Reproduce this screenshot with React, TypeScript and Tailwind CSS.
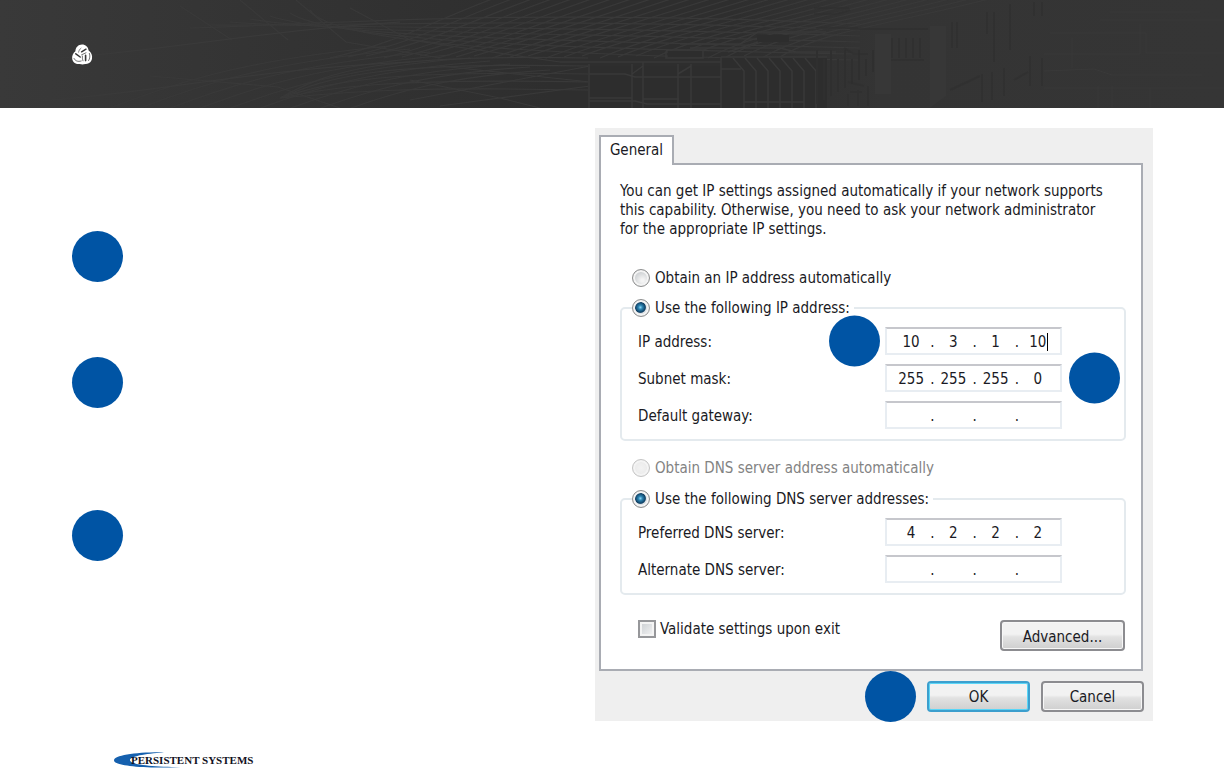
import { type ReactNode, useId } from "react";

const range = (n: number) => Array.from({ length: n }, (_, i) => i);

function HeaderArt() {
  return (
    <svg
      className="absolute inset-0 h-full w-full"
      viewBox="0 0 1224 108"
      preserveAspectRatio="none"
      fill="none"
      aria-hidden="true"
    >
      <defs>
        <linearGradient id="sky" x1="0" x2="1" y1="0" y2="0">
          <stop offset="0" stopColor="#393939" />
          <stop offset="0.28" stopColor="#323232" />
          <stop offset="0.45" stopColor="#2e2e2e" />
          <stop offset="0.6" stopColor="#2e2e2e" />
          <stop offset="0.72" stopColor="#343434" />
          <stop offset="1" stopColor="#353535" />
        </linearGradient>
        <linearGradient id="fade" x1="0" x2="1" y1="0" y2="0">
          <stop offset="0" stopColor="#3a3a3a" stopOpacity="0.1" />
          <stop offset="0.3" stopColor="#3a3a3a" />
          <stop offset="1" stopColor="#3a3a3a" />
        </linearGradient>
      </defs>
      <rect width="1224" height="108" fill="url(#sky)" />
      <g stroke="#393939" strokeWidth="1.2">
        {range(26).map((i) => (
          <path key={i} d={`M${330 + i * 18} ${58 - (i % 3)} C${400 + i * 17} ${42 - i / 2} ${430 + i * 19} 22 ${500 + i * 20} -4`} />
        ))}
        {range(7).map((i) => (
          <path key={i} d={`M${190 + i * 20} ${28 - i * 3} C330 ${24 + i * 3} 520 ${8 + i * 8} 860 ${24 + i * 6}`} />
        ))}
        {range(9).map((i) => (
          <path key={i} d={`M${100 + i * 30} 112 C${170 + i * 28} ${84 + i} ${240 + i * 26} ${60 + i * 2} ${390 + i * 20} ${46 + i * 3}`} />
        ))}
        {range(5).map((i) => (
          <path key={i} d={`M280 98 C330 ${70 + i * 6} 380 ${54 + i * 8} 588 ${58 + i * 8}`} />
        ))}
        <path d="M180 6 L232 40M240 0 L288 40M296 0 L346 42L440 58M350 8 L410 40L560 62M410 80 L500 98L540 108M440 66 L590 82M150 76 L278 87L340 108M410 100 L590 66M440 106 L590 86" />
      </g>
      <path d="M588 66h133v-9h106v51H588z" fill="#2d2d2d" />
      <path d="M668 51h36v6h-36zM757 35h32v7h-32z" fill="#2d2d2d" />
      <g stroke="#393939" strokeWidth="1.5">
        <path d="M589 64V108M632 64V108M643 62V108M678 64V108M691 64V108M721 57V108" />
        <path d="M589 74h36l10 3h86M589 98h43M589 101h46l12 3h74M643 99h36M560 62h161M721 57h106M721 69h20" />
        <path d="M666 52q0-2 3-2h34v8h-37zM680 44h60l18-12h68M690 48h90l16 4h40M758 42l-30 10" />
        {range(7).map((i) => (
          <path key={i} d={`M${733 + i * 12} 58l11 13V108`} />
        ))}
        <path d="M632 74l11-8M678 74l13-8M744 102h60" />
      </g>
      <g stroke="#2f2f2f" strokeWidth="2">
        {range(9).map((i) => (
          <path key={i} d={`M${817 + i * 7} ${50 + (i % 2) * 9}V${104 - i * 4}`} />
        ))}
        {range(5).map((i) => (
          <path key={i} d={`M${892 + i * 7} 38V58`} strokeOpacity="0.8" />
        ))}
        <path d="M814 8h35M814 14h22l14-4M816 28h42M850 29h78M844 48l10 6h14M952 22v26M957 22v26M987 12v22M994 12v50M1010 4v46M1034 2v14M1042 2v14M890 60h34" strokeOpacity="0.6" />
        <path d="M848 82l16 4M850 92h12M848 106V94M858 106V90M868 106V86M950 90l30-14M982 74v28M992 72v28M1004 68v28M1014 80l14-8M1030 56v30M1042 58v28" strokeOpacity="0.6" />
      </g>
      <path d="M875 34h16v60h-16zM930 26h16v70l-16 12z" fill="#373737" />
      <g stroke="#393939" strokeWidth="1">
        <path d="M1050 33h96v20h78M1072 38v30M1044 54h96M1044 71l50-2l18 6h90M1044 88h180M1100 20h124M1110 12h90M1140 24v30M1098 86v22M1112 86v22M1150 88v20" />
        <path d="M0 104 C160 94 240 70 410 62M0 62C140 56 260 30 400 22" stroke="url(#fade)" />
      </g>
    </svg>
  );
}

function KnotMark() {
  return (
    <svg className="relative h-[21px] w-[22px]" viewBox="0 0 22 21" role="img" aria-label="Knot emblem">
      <path
        d="M11 0.6C14.6 0.6 17.2 3 17.6 6.6C20.2 8.4 21.6 11.4 21 14.6C20.4 18.2 17.6 20.4 14.2 20C12.6 20.6 10.4 20.6 8.8 20C5 20.6 1.8 18.4 1.2 15C0.8 12 2 9 4.4 7.2C4.6 3.4 7.4 0.6 11 0.6Z"
        fill="#fff"
      />
      <g fill="none" stroke="#383838" strokeLinecap="round">
        <path d="M10.6 7.8L15 5.2" strokeWidth="1.5" />
        <path d="M14.6 11.4V16.6" strokeWidth="1.6" />
        <path d="M4.8 9.8L9.2 13" strokeWidth="1.5" />
        <path d="M7.6 8.2C7.8 6.6 8.6 5.2 10 4.2" strokeWidth="0.6" />
        <path d="M18.4 9.4C19.2 11.8 19 14.4 17.6 16.6M10.6 10.8L15 8.8" strokeWidth="0.7" />
        <path d="M3 14.4C4.2 17 6.8 18 10.2 17M11.4 12C11.2 13.6 11.4 15.2 12 16.8" strokeWidth="0.7" />
      </g>
    </svg>
  );
}

function Dot({ className = "" }: { className?: string }) {
  return <span className={`block size-[51px] shrink-0 rounded-full bg-[#0054a4] ${className}`} />;
}

const radioBase =
  "m-0 size-[18px] shrink-0 appearance-none rounded-full border border-[#8e8f8f] shadow-[inset_0_0_0_2px_#f4f4f4] bg-[radial-gradient(circle_at_60%_65%,#f4f4f4_10%,#c4c8cb_75%)] checked:bg-[radial-gradient(circle_at_46%_46%,#8fd8f6_0px,#2e86b4_2px,#0f3f63_5px,#dfe3e6_6px,#c4c8cb_8px)] disabled:border-[#c4c4c4] disabled:bg-[radial-gradient(circle,#f2f2f2,#e6e6e6)]";

function Radio({ name, label, checked, disabled }: { name: string; label: string; checked?: boolean; disabled?: boolean }) {
  return (
    <label className={`flex h-5 items-center gap-[5px] ${disabled ? "text-[#838383]" : ""}`}>
      <input type="radio" name={name} defaultChecked={checked} disabled={disabled} className={radioBase} />
      <span>{label}</span>
    </label>
  );
}

function AddressField({ label, parts, caret, children }: { label: string; parts: string[]; caret?: boolean; children?: ReactNode }) {
  const id = useId();
  return (
    <div className="flex h-[28px] items-center">
      <label htmlFor={id} className="flex-1 pt-[2px]">
        {label}
      </label>
      <div className="relative flex h-[28px] w-[177px] items-center border-2 border-[#e8edf2] border-t-[#c6c7cc] bg-white pt-[2px] pr-[3px] pl-[5px]">
        {parts.map((part, i) => (
          <span key={i} className="contents">
            {i > 0 && <span className="w-1 text-center">.</span>}
            <span className="relative flex min-w-0 flex-1">
              <input
                id={i === 0 ? id : undefined}
                aria-label={i === 0 ? undefined : `${label} part ${i + 1}`}
                defaultValue={part}
                className="w-full min-w-0 bg-transparent p-0 text-center outline-none"
              />
              {caret && i === 3 && <span className="absolute top-0 right-[9px] h-[18px] w-px bg-black" />}
            </span>
          </span>
        ))}
        {children}
      </div>
    </div>
  );
}

function Group({ legend, name, children }: { legend: string; name: string; children: ReactNode }) {
  return (
    <fieldset className="rounded-[5px] border-2 border-[#e4eaee] pr-[62px] pb-[10px] pl-[10px]">
      <legend className="pr-1">
        <Radio name={name} label={legend} checked />
      </legend>
      <div className="flex flex-col gap-[9px] pt-[9px] pl-[6px]">{children}</div>
    </fieldset>
  );
}

function Button({ children, primary, className }: { children: ReactNode; primary?: boolean; className: string }) {
  return (
    <button
      type="button"
      className={`h-[31px] rounded-[4px] border-2 bg-linear-to-b from-[#f2f2f2] from-45% via-[#e2e2e2] via-55% to-[#cfcfcf] pt-[2px] ${
        primary ? "border-[#3c9fce] shadow-[inset_0_0_0_1px_#5ad6f7]" : "border-[#8c8c90] shadow-[inset_0_0_0_1px_#f7f7f7]"
      } ${className}`}
    >
      {children}
    </button>
  );
}

function NetworkDialog() {
  return (
    <form className="w-[558px] shrink-0 bg-[#efefef] pt-[7px] pr-[9px] pl-1 font-['DejaVu_Sans_Condensed','Noto_Sans',sans-serif] text-[15px] leading-[18px] text-[#1a1a24]">
      <div role="tablist" className="flex">
        <button
          type="button"
          role="tab"
          aria-selected="true"
          className="relative z-10 -mb-[2px] h-[30px] w-[75px] border-2 border-b-0 border-[#a9acb3] bg-white pb-[2px]"
        >
          General
        </button>
      </div>
      <div className="mr-[1px] border-2 border-[#a9acb3] bg-white pt-[17px] pr-[15px] pb-[18px] pl-[19px]">
        <p className="leading-[19px]">
          You can get IP settings assigned automatically if your network supports
          <br />
          this capability. Otherwise, you need to ask your network administrator
          <br />
          for the appropriate IP settings.
        </p>
        <div className="mt-[29px] pl-[12px]">
          <Radio name="ip" label="Obtain an IP address automatically" />
        </div>
        <div className="mt-[10px]">
          <Group name="ip" legend="Use the following IP address:">
            <AddressField label="IP address:" parts={["10", "3", "1", "10"]} caret>
              <Dot className="absolute top-1/2 right-full mr-[7px] -translate-y-1/2" />
            </AddressField>
            <AddressField label="Subnet mask:" parts={["255", "255", "255", "0"]}>
              <Dot className="absolute top-1/2 left-full ml-[9px] -translate-y-1/2" />
            </AddressField>
            <AddressField label="Default gateway:" parts={["", "", "", ""]} />
          </Group>
        </div>
        <div className="mt-[17px] pl-[12px]">
          <Radio name="dns-auto" label="Obtain DNS server address automatically" disabled />
        </div>
        <div className="mt-[11px]">
          <Group name="dns" legend="Use the following DNS server addresses:">
            <AddressField label="Preferred DNS server:" parts={["4", "2", "2", "2"]} />
            <AddressField label="Alternate DNS server:" parts={["", "", "", ""]} />
          </Group>
        </div>
        <div className="mt-[25px] flex items-start justify-between pr-[1px] pl-[18px]">
          <label className="flex items-center gap-1">
            <input
              type="checkbox"
              className="m-0 size-[18px] shrink-0 appearance-none border-2 border-[#96979a] bg-linear-to-br from-[#c9cdd1] to-[#f6f6f6] shadow-[inset_0_0_0_2px_#f4f4f4]"
            />
            <span>Validate settings upon exit</span>
          </label>
          <Button className="w-[125px]">Advanced...</Button>
        </div>
      </div>
      <div className="flex h-[50px] items-center justify-end gap-[11px]">
        <Dot />
        <Button primary className="w-[103px]">
          OK
        </Button>
        <Button className="w-[103px]">Cancel</Button>
      </div>
    </form>
  );
}

function BrandLogo() {
  return (
    <div className="relative flex h-[18px] w-[142px] items-center">
      <svg className="absolute top-0 left-0 h-[18px] w-[68px]" viewBox="0 0 68 18" aria-hidden="true">
        <path
          d="M50 1.4C22 1 0 4.4 0 9.4C0 14.4 28 18 67 16C38 16 17 13.6 16 9.4C15.4 5.4 30 2.6 50 1.4Z"
          fill="#1560ae"
        />
      </svg>
      <span className="relative pl-[17px] font-['Liberation_Serif',serif] text-[11px] leading-[18px] font-bold whitespace-nowrap text-[#111122]">
        PERSISTENT SYSTEMS
      </span>
    </div>
  );
}

export default function App() {
  return (
    <div className="bg-white">
      <header className="relative flex h-[108px] items-center overflow-hidden bg-[#333333] px-[71px]">
        <HeaderArt />
        <KnotMark />
      </header>
      <main className="flex justify-between pt-5 pr-[71px] pl-[72px]">
        <div className="flex flex-col pt-[103px]">
          <Dot />
          <Dot className="mt-[75px]" />
          <Dot className="mt-[102px]" />
        </div>
        <NetworkDialog />
      </main>
      <footer className="pt-[30px] pl-[114px]">
        <BrandLogo />
      </footer>
    </div>
  );
}
